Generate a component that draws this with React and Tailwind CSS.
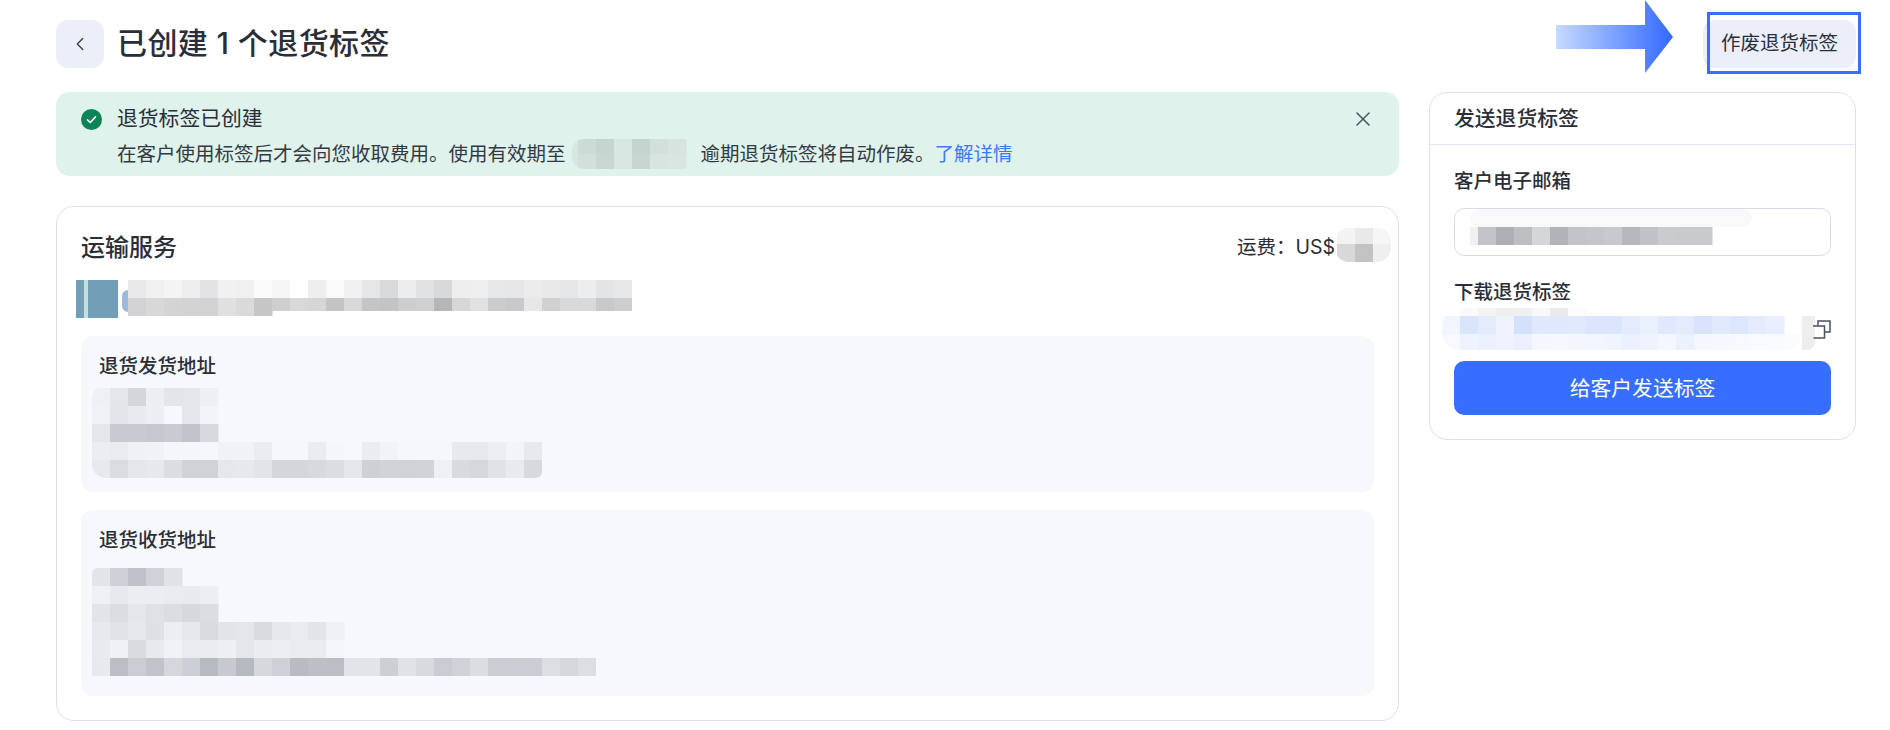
import { ChevronLeft, X } from 'lucide-react';

// redacted stretches of the screenshot: rows of 18px mosaic cells
function Mosaic({ width, height, rows, className = '', children }) {
  return (
    <svg width={width} height={height} viewBox={`0 0 ${width} ${height}`} className={`block shrink-0 ${className}`}>
      {children}
      {rows.map((row, r) =>
        row.cells.map((fill, c) => (
          <rect key={`${r}-${c}`} x={row.x + c * 18} y={row.y} width={18.5} height={row.h || 18} fill={`#${fill}`} />
        ))
      )}
    </svg>
  );
}

const serviceRows = [
  { x: 52, y: 0, h: 18, cells: 'e9e9ea f0f0f1 f4f4f5 eeeeef e3e3e5 f0f1f1 f0f0f1 fbfbfb f6f6f6 ffffff eeeeef f9f9f9 f1f1f2 e5e6e7 d9dadb ecedee e1e2e3 d8d9db eeeeef efeff0 e6e7e8 e6e6e8 ebebec e9e9ea e5e6e7 ecedee e3e4e5 e7e7e8'.split(' ') },
  { x: 52, y: 18, h: 18, cells: 'd3d3d5 d8d8da d4d4d6 d3d3d5 d2d2d4 e0e0e2 dadadc c6c6c9'.split(' ') },
  { x: 196, y: 18, h: 13, cells: 'cfcfd1 d8d8da d6d6d8 c3c3c8 d8d8da c4c5c8 c3c4c7 cccdcf cfd0d2 b5b6b9 d6d7d8 e0e1e2 cbccce c8c9cc e7e7e8 d0d1d3 d8d9da d8d9da c8c9cb cdced0'.split(' ') },
];

const feeRows = [
  { x: 2, y: 0, h: 16, cells: ['f3f3f4', 'e9e9ea', 'f6f6f7'] },
  { x: 2, y: 16, h: 18, cells: ['d8d8da', 'c3c3c5', 'efeff0'] },
];

const dateRows = [
  { x: 6, y: 0, h: 15, cells: 'cbdcd6 c5d6d0 d9e7e2 c4d5cf d2e0db d6e3de'.split(' ') },
  { x: 6, y: 15, h: 15, cells: 'd1e0da c7d7d1 d8e6e1 c6d7d1 d7e5e0 d8e6e1'.split(' ') },
];

const senderRows = [
  { x: 0, y: 3, cells: 'eef0f3 e5e6ea d4d6db edeef2 e4e5e9 e5e6ea eeeff2'.split(' ') },
  { x: 0, y: 21, cells: 'f1f2f6 e4e5e9 e9eaee edeef1 f7f8fb e5e6ea f3f4f8'.split(' ') },
  { x: 0, y: 39, cells: 'e5e6ea c8cad1 c8cad1 c6c8cf c9cbd0 c1c3cb d8d9dd'.split(' ') },
  { x: 0, y: 57, cells: 'ecedf1 eaebee f0f1f5 f1f2f5 f5f6f9 f5f6f9 f6f7fa f1f2f5 f1f2f5 ebecf0 f6f7fa f6f7fa ebecf0 f5f6f9 f7f8fb ebecf0 f2f3f6 f6f7fa f6f7fa f6f7fa e8e9ed e8e9ed edeef1 f3f4f7 e8e9ed'.split(' ') },
  { x: 0, y: 75, cells: 'e8e9ed d9dce1 e5e6ea e7e8eb dcdde1 d0d2d8 d0d2d8 e6e7eb e7e8ec e3e4e8 d5d6db d5d6db d8d9de dcdde2 e5e6ea ced0d5 d2d3d9 d1d2d8 d2d3d9 eff0f3 d9dae0 d6d7dd e1e2e6 e9eaed d8d9de'.split(' ') },
];

const receiverRows = [
  { x: 0, y: 0, cells: 'e3e4e8 d0d1d6 bfc2ca d0d2d7 e1e2e7'.split(' ') },
  { x: 0, y: 18, cells: 'eff0f4 e8e9ed ecedf1 ecedf0 eaebef e9eaee edeef1'.split(' ') },
  { x: 0, y: 36, cells: 'e3e4e8 dcdde2 e5e6ea e0e1e5 dcdde2 d7d8dd dcdde2'.split(' ') },
  { x: 0, y: 54, cells: 'e8e9ed e2e3e7 e7e8ec dfe0e4 edeef1 e6e7ea dadbe0 e3e4e7 e5e6ea dadbe0 e6e7eb eaebef e3e4e8 eff0f3'.split(' ') },
  { x: 0, y: 72, cells: 'e9eaed f0f1f4 dadbdf e8e9ec f1f2f5 eaebee ebecef eeeff2 e5e6e9 ebecf0 edeef2 ebecf0 ebecf0 f4f5f8'.split(' ') },
  { x: 0, y: 90, cells: 'e8e9ec bbbec6 c9ccd5 c0c3cb d6d7db cccfd7 b6bbc2 c6c9d2 b5bac0 d7d8dc ced1da b8bbc3 bcbfc8 bcbec6 e3e4e7 e3e4e7 ccd0d3 e1e2e6 d9dade c9ccd4 cfd2d6 dcdde1 cbcdd1 cbcdd5 cacdd6 dddee2 d6d7da dddee3'.split(' ') },
];

const emailRows = [
  { x: 8, y: 18, cells: 'c3c4c8 aeafb2 bdbec2 d5d6d8 b2b3b7 c3c4c8 c5c6c9 c8c9cc b7b8bc c1c2c6 cacbce c9cacc c9cacc'.split(' ') },
];

const linkRows = [
  { x: 18, y: 0, h: 8, cells: 'fafafa f3f3f3 efefef f0f0f0 f8f8f8 eaeaea fcfcfc'.split(' ') },
  { x: 0, y: 8, cells: 'f1f5fe d9e5fd e4ebfd eef3fe d3e1fc dfe8fd dfe8fd e1e9fd dbe6fd dbe6fd e4ebfd eaf0fe dfe8fd e4ebfd d9e4fc e1e9fd dce6fd e4ebfd e9effe'.split(' ') },
  { x: 0, y: 26, h: 16, cells: 'f7f9ff eff3fe ebf0fe eef3fe ebf0fe f4f7ff f6f8ff f3f6ff f1f5fe f0f4fe ebf0fe eef3fe f4f7ff ecf1fe f4f7ff f5f8ff f7f9ff f8faff fafbff fbfcff'.split(' ') },
];

function AddressPanel({ title, children, className }) {
  return (
    <div className={`rounded-xl bg-[#f7f8fc] px-[18px] pt-[17px] ${className}`}>
      <p className="text-[19.5px] leading-[26px] font-medium text-[#2a2e39]">{title}</p>
      {children}
    </div>
  );
}

export default function App() {
  return (
    <div className="h-[730px] overflow-hidden bg-white pt-5 pl-14 pr-[34px] text-[#2a2e39] font-['Inter','Noto_Sans_CJK_SC',sans-serif]">
      <header className="flex h-12 items-center justify-between">
        <div className="flex items-center gap-[13px]">
          <button type="button" className="flex h-12 w-12 items-center justify-center rounded-xl bg-[#eceffa] text-[#3a3f4c]">
            <ChevronLeft size={22} strokeWidth={1.5} />
          </button>
          <h1 className="-mt-0.5 text-[30px] leading-10 font-medium tracking-[0.4px]">已创建 1 个退货标签</h1>
        </div>
        <div className="relative">
          {/* annotation arrow and highlight drawn over the screenshot */}
          <svg width="117" height="73" viewBox="0 0 117 73" className="absolute top-[-20px] left-[-147px]">
            <defs>
              <linearGradient id="arrowFill" x1="0" x2="1" y1="0" y2="0">
                <stop offset="0" stopColor="#c6daff" />
                <stop offset="1" stopColor="#3269ff" />
              </linearGradient>
            </defs>
            <polygon points="0,25 89,25 89,0 117,37 89,73 89,49 0,49" fill="url(#arrowFill)" />
          </svg>
          <button type="button" className="h-12 w-[153px] rounded-xl bg-[#eceffa] text-[19.5px] text-[#2a2e39]">
            作废退货标签
          </button>
          <div className="absolute top-[-8px] left-[4px] h-[62px] w-[154px] border-[3px] border-[#3a6dfb]" />
        </div>
      </header>

      <div className="mt-6 flex items-start gap-[30px]">
        <main className="w-[1343px] shrink-0">
          <section className="flex h-[84px] rounded-[14px] bg-[#dff2ec] pt-[14px] pr-6 pl-[25px]">
            <svg width="21" height="21" viewBox="0 0 21 21" className="mt-[3px] shrink-0">
              <circle cx="10.5" cy="10.5" r="10.5" fill="#0b8457" />
              <path d="M6.5 10.8l2.8 2.7 5.2-5.6" fill="none" stroke="#fff" strokeWidth="1.6" strokeLinecap="round" strokeLinejoin="round" />
            </svg>
            <div className="ml-[15px] flex-1 leading-[26px]">
              <p className="text-[20.8px]">退货标签已创建</p>
              <div className="mt-[7px] flex items-center text-[19.5px] text-[#343944]">
                <span>在客户使用标签后才会向您收取费用。使用有效期至</span>
                <Mosaic width={116} height={30} rows={dateRows} className="ml-[6px] rounded-l-[12px] rounded-r-[4px]">
                  <rect x="0" y="0" width="8" height="30" fill="#d8e6e1" />
                </Mosaic>
                <span className="ml-[13px]">逾期退货标签将自动作废。</span>
                <a href="#" className="text-[#3e78f7]">了解详情</a>
              </div>
            </div>
            <X size={24} strokeWidth={1.5} className="mt-px shrink-0 text-[#4a5160]" />
          </section>

          <section className="mt-[30px] rounded-[18px] border border-[#dde0f0] px-6 pt-[25px] pb-6">
            <div className="flex h-8 items-center justify-between">
              <h2 className="text-2xl leading-8 font-medium">运输服务</h2>
              <div className="flex items-center text-[19.5px]">
                <span>运费：US$</span>
                <Mosaic width={56} height={34} rows={feeRows} className="-mt-[6px] -mr-[17px] rounded-l-[14px] rounded-r-[14px]" />
              </div>
            </div>
            <Mosaic width={556} height={38} rows={serviceRows} className="mt-4 -ml-[5px]">
              <rect x="0" y="0" width="42" height="38" fill="#729fb7" />
              <rect x="8" y="0" width="4" height="38" fill="#c5dfe1" />
              <rect x="46" y="10" width="12" height="22" rx="6" fill="#9dbbd8" />
            </Mosaic>
            <AddressPanel title="退货发货地址" className="mt-[18px] pb-[14px]">
              <Mosaic width={450} height={93} rows={senderRows} className="mt-[6px] -ml-[7px] rounded-l-[14px] rounded-br-[6px]" />
            </AddressPanel>
            <AddressPanel title="退货收货地址" className="mt-[18px] pb-5">
              <Mosaic width={504} height={108} rows={receiverRows} className="mt-[15px] -ml-[7px] rounded-tl-[6px]" />
            </AddressPanel>
          </section>
        </main>

        <aside className="w-[427px] shrink-0 rounded-[18px] border border-[#dde0f0]">
          <div className="flex h-[52px] items-center border-b border-[#e4e6f2] px-6 text-[20.8px] font-medium">发送退货标签</div>
          <div className="px-6 pt-[23px] pb-6">
            <label className="block text-[19.5px] leading-[26px] font-medium">客户电子邮箱</label>
            <div className="mt-[14px] h-12 overflow-hidden rounded-[10px] border border-[#d9dcee]">
              <Mosaic width={290} height={46} rows={emailRows} className="ml-[15px]">
                <rect x="0" y="0" width="282" height="18" rx="9" fill="#f9f9fb" />
                <rect x="0" y="18" width="10" height="18" fill="#f0f0f1" />
              </Mosaic>
            </div>
            <label className="mt-[23px] block text-[19.5px] leading-[26px] font-medium">下载退货标签</label>
            <div className="relative mt-[3px] h-[42px]">
              <Mosaic width={360} height={42} rows={linkRows} className="-ml-3 rounded-l-[18px] rounded-br-[18px]" />
              <div className="absolute top-[8px] right-[16px] h-[34px] w-[13px] rounded-br-[8px] bg-[#eeeeef]" />
              <svg width="19" height="19" viewBox="0 0 19 19" className="absolute top-[12px] right-0" fill="none" stroke="#4a5160" strokeWidth="1.5">
                <path d="M6 5.5V1h12v11h-5.5" />
                <path d="M1 6h11.5v12H1.5" />
              </svg>
            </div>
            <button type="button" className="mt-[11px] h-[54px] w-full rounded-[10px] bg-[#376eff] pt-0.5 text-[20.8px] text-white">
              给客户发送标签
            </button>
          </div>
        </aside>
      </div>
    </div>
  );
}
